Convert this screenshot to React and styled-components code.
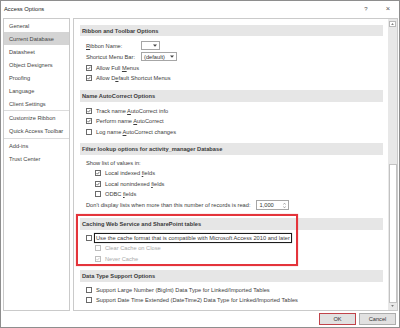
import React from 'react';
import styled, { createGlobalStyle } from 'styled-components';

const GlobalStyle = createGlobalStyle`
  html, body {
    margin: 0;
    padding: 0;
    background: #fff;
  }
`;

const Window = styled.div`
  width: 400px;
  height: 328px;
  box-sizing: border-box;
  border: 1px solid #8e8e8e;
  background: #fff;
  display: flex;
  flex-direction: column;
  font-family: "Liberation Sans", Arial, sans-serif;
  font-size: 5.7px;
  color: #3c3c3c;
  overflow: hidden;
`;

const TitleBar = styled.div`
  height: 17px;
  flex: none;
  display: flex;
  align-items: center;
  padding-left: 3px;
`;

const Title = styled.div`
  color: #222;
  font-size: 5.8px;
  margin-top: -2px;
`;

const Controls = styled.div`
  margin-left: auto;
  display: flex;
  height: 100%;
`;

const ControlButton = styled.div`
  width: 22px;
  display: flex;
  align-items: center;
  justify-content: center;
  color: #555;
  font-size: ${p => p.$size || 6}px;
  margin-top: -2px;
`;

const Body = styled.div`
  flex: none;
  height: 293px;
  display: flex;
  gap: 3px;
  padding: 0 1px 0 2px;
`;

const Nav = styled.div`
  width: 67px;
  box-sizing: border-box;
  border: 1px solid #cacaca;
  display: flex;
  flex-direction: column;
`;

const NavItem = styled.div`
  height: 13px;
  flex: none;
  display: flex;
  align-items: center;
  padding-left: 5px;
  color: #444;
  background: ${p => (p.$active ? '#d4d4d4' : 'transparent')};
  white-space: nowrap;
`;

const NavDivider = styled.div`
  height: 1px;
  margin: 0.25px 0 0.25px;
  background: #dcdcdc;
`;

const Content = styled.div`
  flex: 1;
  box-sizing: border-box;
  border: 1px solid #cacaca;
  display: flex;
  min-width: 0;
`;

const ScrollArea = styled.div`
  position: relative;
  flex: 1;
  padding: 6px 5px 0 6px;
  display: flex;
  flex-direction: column;
  min-width: 0;
`;

const Section = styled.div`
  margin-bottom: ${p => p.$mb || 0}px;
`;

const SectionHeader = styled.div`
  height: ${p => p.$h || 11.5}px;
  display: flex;
  align-items: center;
  padding-left: 2px;
  background: #e6e6e6;
  font-weight: bold;
  color: #3a3a3a;
  white-space: nowrap;
`;

const SectionBody = styled.div`
  padding: ${p => p.$pt || 3}px 0 0 6px;
  display: flex;
  flex-direction: column;
`;

const Row = styled.div`
  height: ${p => p.$h || 10.5}px;
  display: flex;
  align-items: center;
  padding-left: ${p => (p.$indent ? 9 : 0)}px;
  color: ${p => (p.$disabled ? '#a8a8a8' : 'inherit')};
  white-space: nowrap;
`;

const Box = styled.div`
  width: 6px;
  height: 6px;
  box-sizing: border-box;
  border: 1px solid ${p => (p.$disabled ? '#bdbdbd' : '#6a6a6a')};
  background: #fff;
  flex: none;
  margin-right: 4px;
  display: flex;
  align-items: center;
  justify-content: center;
`;

const Focus = styled.span`
  border: 1px solid #1c1c1c;
  padding: 1px 1px 1px 1px;
  margin-left: -2px;
  box-shadow: 0 0 1px #999;
`;

const Label = styled.div`
  width: 55px;
  flex: none;
`;

const Select = styled.div`
  width: ${p => p.$w}px;
  height: 9px;
  box-sizing: border-box;
  border: 1px solid #a6a6a6;
  display: flex;
  align-items: center;
  padding-left: 2px;
  color: #333;
`;

const Caret = styled.svg`
  margin-left: auto;
  margin-right: 2px;
`;

const Spin = styled.div`
  width: 33px;
  height: 10px;
  box-sizing: border-box;
  border: 1px solid #a6a6a6;
  margin-left: 5px;
  display: flex;
  align-items: center;
  padding-left: 3px;
  color: #333;
`;

const SpinArrows = styled.div`
  margin-left: auto;
  margin-right: 2px;
  display: flex;
  flex-direction: column;
  gap: 1px;
`;

const Key = styled.span`
  text-decoration: underline;
`;

const Annotation = styled.div`
  position: absolute;
  left: 2px;
  top: 195px;
  width: 222px;
  height: 52px;
  box-sizing: border-box;
  border: 2px solid #e4343b;
  pointer-events: none;
  box-shadow: 0 0 1px rgba(228, 52, 59, 0.5);
`;

const Scrollbar = styled.div`
  width: 9px;
  flex: none;
  background: #e8e8e8;
  display: flex;
  flex-direction: column;
  align-items: center;
  padding: 2px 0 1px;
  box-sizing: border-box;
`;

const ArrowBox = styled.div`
  width: 7px;
  height: 6px;
  flex: none;
  display: flex;
  align-items: center;
  justify-content: center;
  background: ${p => (p.$filled ? '#fff' : 'transparent')};
  border: 1px solid ${p => (p.$filled ? '#b9b9b9' : 'transparent')};
  box-sizing: border-box;
`;

const Thumb = styled.div`
  width: 8px;
  margin-top: auto;
  height: 139px;
  box-sizing: border-box;
  background: #fff;
  border: 1px solid #c2c2c2;
`;

const Footer = styled.div`
  flex: 1;
  display: flex;
  justify-content: flex-end;
  align-items: flex-start;
  gap: 3px;
  padding: 2px 3px 0 0;
`;

const Button = styled.div`
  width: 37px;
  height: 12px;
  box-sizing: border-box;
  background: #e1e1e1;
  border: 1px solid ${p => (p.$default ? '#c0434a' : '#adadad')};
  display: flex;
  align-items: center;
  justify-content: center;
  color: #333;
`;

const Check = ({ checked, disabled }) => (
  <Box $disabled={disabled}>
    {checked && (
      <svg width="4" height="4" viewBox="0 0 8 8">
        <polyline
          points="1,4.2 3,6.3 7,1.5"
          fill="none"
          stroke={disabled ? '#b5b5b5' : '#333'}
          strokeWidth="1.3"
        />
      </svg>
    )}
  </Box>
);

const CheckRow = ({ checked, disabled, indent, focus, children }) => (
  <Row $indent={indent} $disabled={disabled}>
    <Check checked={checked} disabled={disabled} />
    {focus ? <Focus>{children}</Focus> : <span>{children}</span>}
  </Row>
);

const DownCaret = () => (
  <Caret width="4" height="3" viewBox="0 0 4 3">
    <path d="M0 0.5 L4 0.5 L2 2.8 Z" fill="#444" />
  </Caret>
);

const navGroups = [
  ['General', 'Current Database', 'Datasheet', 'Object Designers', 'Proofing', 'Language', 'Client Settings'],
  ['Customize Ribbon', 'Quick Access Toolbar'],
  ['Add-ins', 'Trust Center']
];

export default function App() {
  return (
    <>
      <GlobalStyle />
      <Window>
        <TitleBar>
          <Title>Access Options</Title>
          <Controls>
            <ControlButton $size={6}>?</ControlButton>
            <ControlButton $size={7.5}>×</ControlButton>
          </Controls>
        </TitleBar>
        <Body>
          <Nav>
            {navGroups.map((group, gi) => (
              <React.Fragment key={gi}>
                {gi > 0 && <NavDivider />}
                {group.map(item => (
                  <NavItem key={item} $active={item === 'Current Database'}>{item}</NavItem>
                ))}
              </React.Fragment>
            ))}
          </Nav>
          <Content>
            <ScrollArea>
              <Section $mb={6.5}>
                <SectionHeader $h={11}>Ribbon and Toolbar Options</SectionHeader>
                <SectionBody $pt={4}>
                  <Row $h={11}>
                    <Label><Key>R</Key>ibbon Name:</Label>
                    <Select $w={19}><DownCaret /></Select>
                  </Row>
                  <Row $h={11.5}>
                    <Label>Shortcut Menu Bar:</Label>
                    <Select $w={36}>(default)<DownCaret /></Select>
                  </Row>
                  <CheckRow checked>Allow Full <Key>M</Key>enus</CheckRow>
                  <CheckRow checked>Allow D<Key>e</Key>fault Shortcut Menus</CheckRow>
                </SectionBody>
              </Section>

              <Section $mb={6}>
                <SectionHeader>Name AutoCorrect Options</SectionHeader>
                <SectionBody $pt={4}>
                  <CheckRow checked>Track name <Key>A</Key>utoCorrect info</CheckRow>
                  <CheckRow checked>Perform name <Key>A</Key>utoCorrect</CheckRow>
                  <CheckRow>Log name <Key>A</Key>utoCorrect changes</CheckRow>
                </SectionBody>
              </Section>

              <Section $mb={7.5}>
                <SectionHeader>Filter lookup options for activity_manager Database</SectionHeader>
                <SectionBody $pt={3}>
                  <Row>Show list of values in:</Row>
                  <CheckRow checked indent>Local indexed <Key>f</Key>ields</CheckRow>
                  <CheckRow checked indent>Local nonindexed <Key>f</Key>ields</CheckRow>
                  <CheckRow indent>ODBC <Key>f</Key>ields</CheckRow>
                  <Row $h={11}>
                    Don't display lists when more than this number of records is read:
                    <Spin>
                      1,000
                      <SpinArrows>
                        <svg width="3" height="2" viewBox="0 0 4 3"><path d="M0 2.5 L2 0.3 L4 2.5" fill="none" stroke="#666" strokeWidth="0.8" /></svg>
                        <svg width="3" height="2" viewBox="0 0 4 3"><path d="M0 0.5 L2 2.7 L4 0.5" fill="none" stroke="#666" strokeWidth="0.8" /></svg>
                      </SpinArrows>
                    </Spin>
                  </Row>
                </SectionBody>
              </Section>

              <Section $mb={6}>
                <SectionHeader>Caching Web Service and SharePoint tables</SectionHeader>
                <SectionBody $pt={3}>
                  <CheckRow focus>Use the cache format that is compatible with Microsoft Access 2010 and later</CheckRow>
                  <CheckRow indent disabled>Clear Cache on Close</CheckRow>
                  <CheckRow indent disabled checked>Never Cache</CheckRow>
                </SectionBody>
              </Section>

              <Section>
                <SectionHeader>Data Type Support Options</SectionHeader>
                <SectionBody $pt={3}>
                  <CheckRow>Support Large Number (BigInt) Data Type for Linked/Imported Tables</CheckRow>
                  <CheckRow>Support Date Time Extended (DateTime2) Data Type for Linked/Imported Tables</CheckRow>
                </SectionBody>
              </Section>

              <Annotation />
            </ScrollArea>
            <Scrollbar>
              <ArrowBox $filled>
                <svg width="3" height="2" viewBox="0 0 4 3"><path d="M0 2.7 L2 0.3 L4 2.7 Z" fill="#555" /></svg>
              </ArrowBox>
              <Thumb />
              <ArrowBox>
                <svg width="3" height="2" viewBox="0 0 4 3"><path d="M0 0.3 L2 2.7 L4 0.3 Z" fill="#555" /></svg>
              </ArrowBox>
            </Scrollbar>
          </Content>
        </Body>
        <Footer>
          <Button $default>OK</Button>
          <Button>Cancel</Button>
        </Footer>
      </Window>
    </>
  );
}
